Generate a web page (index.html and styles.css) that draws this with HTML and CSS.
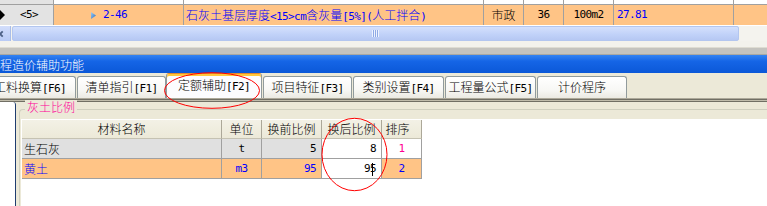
FILE: index.html
```html
<!DOCTYPE html>
<html lang="zh">
<head>
<meta charset="utf-8">
<title>定额辅助</title>
<link rel="stylesheet" href="styles.css">
</head>
<body>
<div class="list">
  <div class="lrow prev">
    <div class="c c0"></div><div class="c"></div><div class="c"></div><div class="c"></div><div class="c"></div><div class="c"></div><div class="c"></div><div class="c last"></div>
  </div>
  <div class="lrow cur">
    <div class="c c0"><span class="ind"></span><span class="no a">&lt;5&gt;</span></div>
    <div class="c c1"><svg class="tri" width="5" height="7" viewBox="0 0 5 7"><defs><linearGradient id="tg" x1="0" y1="0" x2="1" y2="1"><stop offset="0" stop-color="#9fd0f5"/><stop offset="1" stop-color="#2a6cc0"/></linearGradient></defs><polygon points="0,0 5,3.5 0,7" fill="url(#tg)"/></svg><span class="blue a">2-46</span></div>
    <div class="c c2 blue">石灰土基层厚度<span class="a">&lt;15&gt;cm</span>含灰量<span class="a">[5%](</span>人工拌合<span class="a">)</span></div>
    <div class="c ctr">市政</div>
    <div class="c ctr a">36</div>
    <div class="c ctr a">100m2</div>
    <div class="c c6 blue a">27.81</div>
    <div class="c last"></div>
  </div>
</div>
<div class="hscroll">
  <div class="sbtn"><svg width="11" height="14" viewBox="0 0 11 14"><polyline points="3,4 0,7 3,10" fill="none" stroke="#4d6185" stroke-width="2"/></svg></div>
  <div class="thumb"><span class="grip"></span></div>
  <div class="track"></div>
</div>
<div class="gap1"></div>
<div class="split"></div>
<div class="title">程造价辅助功能</div>
<div class="tabs">
  <div class="tab w92 mr1">工料换算<span class="a">[F6]</span></div>
  <div class="tab w89">清单指引<span class="a">[F1]</span></div>
  <div class="tab sel w96 mr1">定额辅助<span class="a">[F2]</span></div>
  <div class="tab w89 mr1">项目特征<span class="a">[F3]</span></div>
  <div class="tab w91 mr1">类别设置<span class="a">[F4]</span></div>
  <div class="tab w91 mr1">工程量公式<span class="a">[F5]</span></div>
  <div class="tab w90">计价程序</div>
</div>
<div class="sep"></div>
<div class="body">
  <div class="leftpane"></div>
  <div class="group">
    <div class="legend">灰土比例</div>
    <div class="grid">
      <div class="tbl">
        <div class="th">材料名称</div>
        <div class="th">单位</div>
        <div class="th">换前比例</div>
        <div class="th">换后比例</div>
        <div class="th th5">排序</div>

        <div class="td gray">生石灰</div>
        <div class="td gray ctr a">t</div>
        <div class="td gray num a">5</div>
        <div class="td white num a">8</div>
        <div class="td white ctr pink a">1</div>

        <div class="td org blue">黄土</div>
        <div class="td org ctr blue a">m3</div>
        <div class="td org num blue a">95</div>
        <div class="td white num a">95<span class="caret"></span></div>
        <div class="td org ctr blue a">2</div>
      </div>
    </div>
  </div>
</div>
<svg class="marks" width="767" height="206" viewBox="0 0 767 206">
  <ellipse cx="212" cy="90.5" rx="47.5" ry="17.8" fill="none" stroke="#ff0000" stroke-width="1"/>
  <ellipse cx="354.5" cy="154.5" rx="32.5" ry="36.2" fill="none" stroke="#ff0000" stroke-width="1"/>
</svg>
</body>
</html>
```

FILE: styles.css
```css
* {
  box-sizing: border-box;
  margin: 0;
  padding: 0;
}

html,
body {
  width: 767px;
  height: 206px;
  overflow: hidden;
  background: #ece9d8;
}

body {
  position: relative;
  font-family: "Noto Sans CJK SC", "Noto Sans", sans-serif;
  font-size: 12px;
  font-weight: 300;
  color: #000;
}

/* ASCII runs: ~6px-per-character monospace, like the bitmap UI font */
.a {
  font-family: "DejaVu Sans Mono", "Liberation Mono", monospace;
  font-size: 11px;
  letter-spacing: -0.6px;
  font-weight: 400;
}

.blue { color: #0000ff; }
.pink { color: #ff0090; }
.ctr { text-align: center; }

/* top list grid */
.list { background: #fff; }

.lrow {
  display: grid;
  grid-template-columns: 54px 130px 300px 40px 40px 50px 120px 33px;
}

.c {
  border-right: 1px solid #a0a0a0;
  overflow: hidden;
  white-space: nowrap;
}

.c.last { border-right: none; }

.prev {
  height: 5px;
  border-bottom: 1px solid #a0a0a0;
}

.prev .c0 { background: #e3e3e3; }

.cur {
  height: 20px;
  line-height: 20px;
  background: #ffc486;
}

.cur .c0 {
  background: #e3e3e3;
  display: flex;
  align-items: center;
}

.ind {
  width: 0;
  height: 0;
  border-left: 5px solid #000;
  border-top: 5px solid transparent;
  border-bottom: 5px solid transparent;
}

.no { margin-left: 15px; }

.c1 {
  display: flex;
  align-items: center;
  padding-left: 37px;
}

.tri { margin-right: 7px; flex: none; }

.c2 { padding-left: 2px; }
.c6 { padding-left: 3px; }

/* horizontal scrollbar */
.hscroll {
  height: 16px;
  display: flex;
  background: #f4f3ee;
  border-top: 1px solid #fff;
}

.sbtn {
  width: 11px;
  background: linear-gradient(#d3defb, #b9cbf5);
  border-right: 1px solid #a9bde8;
  display: flex;
  align-items: center;
}

.thumb {
  width: 727px;
  margin-left: 1px;
  border: 1px solid #b3c6ef;
  border-radius: 2px;
  background: linear-gradient(#d4e0fc, #c0d1f8 60%, #b6c8f3);
  display: flex;
  align-items: center;
  justify-content: center;
}

.grip {
  width: 7px;
  height: 7px;
  background: repeating-linear-gradient(90deg, #eef3fe 0 1px, #8faae6 1px 2px);
}

.track { flex: 1; }

.gap1 {
  height: 6px;
  background: #f3f2ec;
}

.split {
  height: 8px;
  border-top: 1px solid #dedcd2;
  border-bottom: 1px solid #a9a8a2;
  background: #c4c3be;
}

/* title bar */
.title {
  height: 18px;
  line-height: 18px;
  padding-top: 1px;
  color: #fff;
  white-space: nowrap;
  background: linear-gradient(#3383f2, #1565e6 35%, #0b58d8);
}

/* tabs */
.tabs {
  height: 25px;
  display: flex;
  align-items: flex-end;
  margin-left: -16px;
  width: 783px;
}

.tab {
  height: 22px;
  line-height: 20px;
  text-align: center;
  white-space: nowrap;
  overflow: hidden;
  border: 1px solid #919b9c;
  border-bottom: none;
  border-radius: 3px 3px 0 0;
  background: linear-gradient(#ffffff, #f8f8f5 60%, #ebeae2);
}

.tab.sel {
  height: 25px;
  line-height: 22px;
  border-top: 1px solid #e68b2c;
  box-shadow: inset 0 2px 0 #ffc83c;
  background: linear-gradient(#fcfcfe, #fcfcfe);
}

.w89 { width: 89px; }
.w90 { width: 90px; }
.w91 { width: 91px; }
.w92 { width: 92px; }
.w96 { width: 96px; }
.mr1 { margin-right: 1px; }

.sep {
  height: 4px;
  border-top: 1px solid #aca899;
  border-bottom: 1px solid #716f64;
  background: linear-gradient(#716f64 50%, #c0bcab 50%);
}

/* body */
.body {
  height: 104px;
  display: flex;
}

.leftpane {
  width: 16px;
  flex: none;
  background: #fff;
  border-right: 1px solid #1f3d6f;
  border-top-right-radius: 3px;
}

.group {
  flex: 1;
  margin: 7px 0 0 3px;
  border-top: 1px solid #d0d0bf;
  border-left: 1px solid #d0d0bf;
  border-top-left-radius: 4px;
  display: flex;
  flex-direction: column;
}

.legend {
  align-self: flex-start;
  margin: -10px 0 0 5px;
  padding: 0 2px;
  height: 14px;
  line-height: 13px;
  background: #ece9d8;
  color: #ff0099;
}

.grid {
  flex: 1;
  margin: 5px 0 0 1px;
  padding: 1px 0 0 1px;
  background: #fff;
}

.tbl {
  display: grid;
  grid-template-columns: 200px 40px 60px 60px 40px;
  width: 400px;
}

.th {
  height: 19px;
  line-height: 18px;
  text-align: center;
  background: linear-gradient(#f3f1e6, #ece9d8);
  border-bottom: 1px solid #c5c2b2;
  border-right: 1px solid #aca899;
}

.th5 { padding-right: 8px; }

.td {
  height: 20px;
  line-height: 19px;
  padding: 0 2px;
  white-space: nowrap;
  border-right: 1px solid #a0a0a0;
  border-bottom: 1px solid #a0a0a0;
}

.td.num {
  text-align: right;
  padding-right: 5px;
}

.gray { background: #e0e0e0; }
.white { background: #fff; }
.org { background: #ffc486; }

.caret {
  display: inline-block;
  width: 1px;
  height: 13px;
  background: #000;
  vertical-align: middle;
  margin-left: -4px;
  margin-right: 3px;
}

.marks {
  position: absolute;
  left: 0;
  top: 0;
  pointer-events: none;
}
```
